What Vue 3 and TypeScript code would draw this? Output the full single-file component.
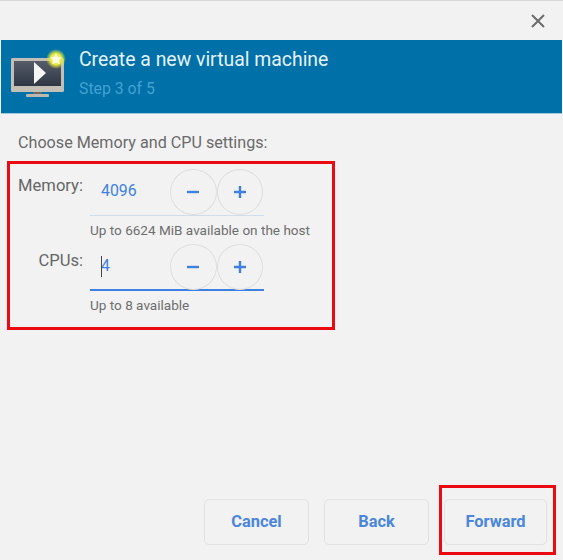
<script setup lang="ts">
interface Spin { label: string; value: string; hint: string; focused: boolean }
const spins: Spin[] = [
  { label: 'Memory:', value: '4096', hint: 'Up to 6624 MiB available on the host', focused: false },
  { label: 'CPUs:', value: '4', hint: 'Up to 8 available', focused: true },
]
const actions = ['Cancel', 'Back', 'Forward']
</script>

<template>
  <div class="dialog">
    <div class="titlebar">
      <svg class="close" width="16" height="16" viewBox="0 0 16 16">
        <path d="M2 2 L14 14 M14 2 L2 14" stroke="#6b6b6b" stroke-width="2" fill="none" />
      </svg>
    </div>
    <div class="banner">
      <svg class="logo" width="56" height="48" viewBox="0 0 56 48">
        <defs>
          <linearGradient id="scr" x1="0" y1="0" x2="0" y2="1">
            <stop offset="0" stop-color="#565d69" />
            <stop offset="1" stop-color="#2f3644" />
          </linearGradient>
          <radialGradient id="glow">
            <stop offset="0" stop-color="#fbfbc0" />
            <stop offset="0.55" stop-color="#e6ea3a" />
            <stop offset="1" stop-color="#e6ea3a" stop-opacity="0" />
          </radialGradient>
        </defs>
        <rect x="0" y="9" width="53" height="34" rx="1.5" fill="#c3beb6" />
        <rect x="3" y="12" width="47" height="25" fill="url(#scr)" />
        <rect x="22" y="43" width="9" height="3" fill="#6d6a66" />
        <rect x="15" y="45" width="23" height="3" rx="1" fill="#bdb8b0" />
        <path d="M23 13 L35 24 L23 35 Z" fill="#f6f6f6" />
        <circle cx="45" cy="10" r="10" fill="url(#glow)" />
        <path d="M45 4 L46.8 8 L51 8.4 L47.8 11.2 L48.8 15.4 L45 13.2 L41.2 15.4 L42.2 11.2 L39 8.4 L43.2 8 Z" fill="#fbfbe6" />
      </svg>
      <div class="heading">
        <div class="title">Create a new virtual machine</div>
        <div class="step">Step 3 of 5</div>
      </div>
    </div>

    <div class="content">
      <div class="prompt">Choose Memory and CPU settings:</div>
      <div class="settings">
        <div class="spin" v-for="s in spins" :key="s.label">
          <div class="label">{{ s.label }}</div>
          <div class="control">
            <div class="field" :class="{ focused: s.focused }">
              <div class="value"><span v-if="s.focused" class="caret"></span>{{ s.value }}</div>
              <button class="round">
                <svg width="14" height="14" viewBox="0 0 14 14"><path d="M1 7 H13" stroke="#3f80e0" stroke-width="2.4" /></svg>
              </button>
              <button class="round">
                <svg width="14" height="14" viewBox="0 0 14 14"><path d="M1 7 H13 M7 1 V13" stroke="#3f80e0" stroke-width="2.4" /></svg>
              </button>
            </div>
            <div class="hint">{{ s.hint }}</div>
          </div>
        </div>
        <div class="mark mark-settings"></div>
      </div>
    </div>

    <div class="footer">
      <button v-for="a in actions" :key="a" class="action">{{ a }}</button>
      <div class="mark mark-forward"></div>
    </div>
  </div>
</template>

<style>
html, body { margin: 0; background: #f2f2f2; }
</style>

<style scoped>
.dialog {
  position: relative;
  width: 563px;
  height: 560px;
  box-sizing: border-box;
  display: flex;
  flex-direction: column;
  background: #f2f2f2;
  border-top: 1px solid #d8d8d8;
  font-family: Roboto, "Liberation Sans", sans-serif;
  overflow: hidden;
}
.titlebar {
  height: 39px;
  flex: none;
  display: flex;
  justify-content: flex-end;
  align-items: center;
  padding-right: 17px;
}
.close { display: block; }
.banner {
  flex: none;
  height: 73px;
  margin: 0 1px;
  background: #0070a8;
  display: flex;
  align-items: flex-start;
  border-bottom: 1px solid #9ec6dc;
  box-sizing: content-box;
}
.logo { margin: 9px 0 0 10px; flex: none; }
.heading { margin-left: 12px; padding-top: 7px; }
.title { font-size: 19.4px; line-height: 26px; color: #e6f2f8; }
.step { font-size: 15.8px; line-height: 20px; margin-top: 6px; color: #46a0d2; }
.content { flex: 1; padding: 19px 0 0 18px; position: relative; }
.prompt { font-size: 16.15px; line-height: 20px; color: #6a6a6a; }
.settings { position: relative; margin-top: 16px; }
.spin { display: flex; height: 75px; }
.label {
  width: 65px;
  text-align: right;
  font-size: 16.6px;
  line-height: 18px;
  color: #666;
  padding-top: 8px;
  flex: none;
}
.control { margin-left: 7px; }
.field {
  width: 174px;
  height: 47px;
  box-sizing: border-box;
  display: flex;
  align-items: flex-start;
  border-bottom: 1px solid #d3dcea;
}
.field.focused { border-bottom: 2px solid #3f7fe0; }
.value {
  width: 80px;
  box-sizing: border-box;
  padding: 13px 0 0 11px;
  font-size: 15.8px;
  line-height: 18px;
  color: #3f80e0;
  position: relative;
}
.caret {
  position: absolute;
  left: 11px;
  top: 12px;
  width: 1px;
  height: 21px;
  background: #444;
}
.round {
  width: 46.5px;
  height: 46px;
  flex: none;
  border: 1.5px solid #dedede;
  border-radius: 50%;
  background: #f2f2f2;
  padding: 0;
  display: flex;
  align-items: center;
  justify-content: center;
}
.hint { font-size: 13.55px; line-height: 16px; margin-top: 6px; color: #6e6e6e; }
.footer {
  flex: none;
  position: relative;
  height: 61px;
  display: flex;
  gap: 15px;
  padding-left: 204px;
  align-items: flex-start;
}
.action {
  width: 105px;
  height: 46px;
  box-sizing: border-box;
  border: 1.5px solid #e2e2e2;
  border-radius: 5px;
  background: #f2f2f2;
  color: #4a86dc;
  font-family: inherit;
  font-size: 16.4px;
  font-weight: 700;
  padding: 0 0 1px;
}
.action:last-of-type { width: 103px; }
.mark { position: absolute; border: 3px solid #ec0a12; box-sizing: border-box; pointer-events: none; }
.mark-settings { left: -11px; top: -8px; width: 328px; height: 169px; }
.mark-forward { left: 439px; top: -14px; width: 117px; height: 70px; }
</style>
